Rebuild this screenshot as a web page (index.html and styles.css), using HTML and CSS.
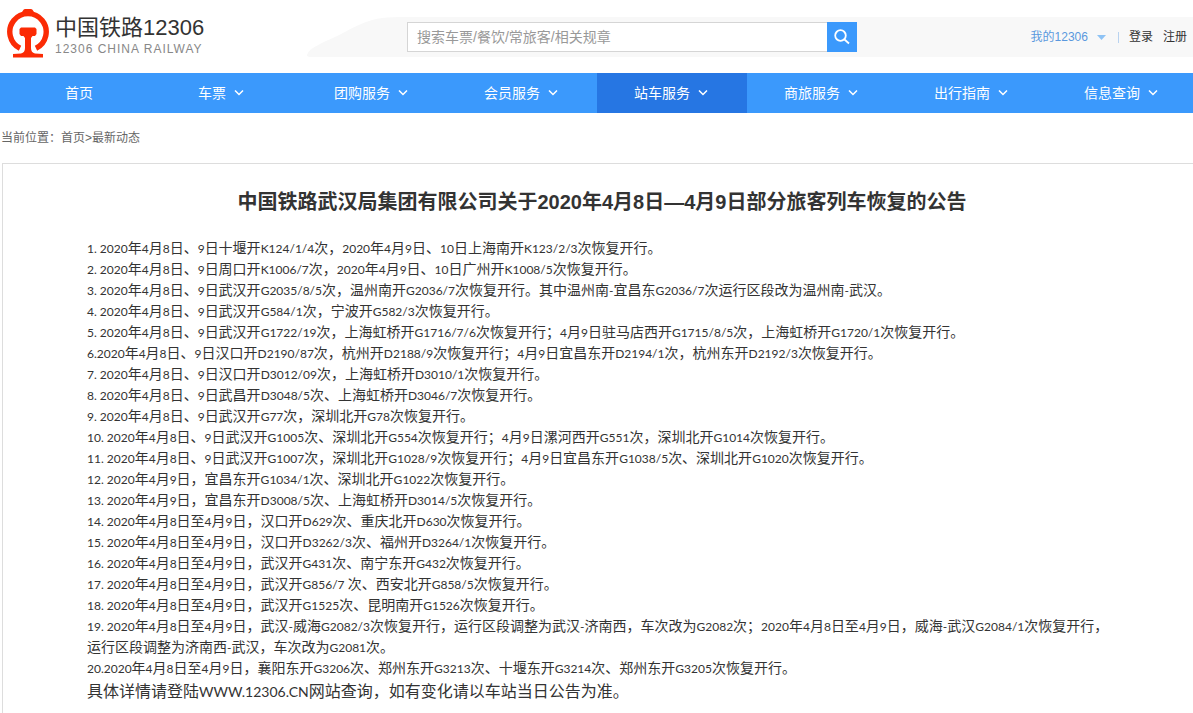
FILE: index.html
```html
<!DOCTYPE html>
<html lang="zh-CN">
<head>
<meta charset="utf-8">
<title>中国铁路12306</title>
<link rel="stylesheet" href="styles.css">
</head>
<body>
<header class="header">
  <a class="logo" href="#">
    <svg class="logo-mark" viewBox="0 0 42 49" width="42" height="49" aria-hidden="true">
      <path d="M13 39.200A18.200 18.200 0 1 1 29 39.200" fill="none" stroke="#fb2b05" stroke-width="5.400"/>
      <path d="M14 5L16 1.500Q16.500 0 18 0H24Q25.500 0 26 1.500L28 5Z" fill="#fb2b05"/>
      <path d="M14 18.500H28L29.500 20V25L28 27H25.500L24 29V39Q24 43.500 28 44.500L36 45V48.500H6V45L14 44.500Q18 43.500 18 39V29L16.500 27H14L12.500 25V20Z" fill="#fb2b05"/>
    </svg>
    <span class="logo-text">
      <span class="logo-cn">中国铁路12306</span>
      <span class="logo-en">12306 CHINA RAILWAY</span>
    </span>
  </a>
  <div class="header-bar">
    <svg class="swoosh" viewBox="0 0 100 40" width="100" height="40" aria-hidden="true"><path d="M0 38C2 31 15 26 28 20C48 11 58 0 92 0H100V40H4Q0 40 0 38Z" fill="#f8f8f8"/></svg>
    <form class="search">
      <input class="search-input" type="text" aria-label="搜索" placeholder="搜索车票/餐饮/常旅客/相关规章">
      <button class="search-button" type="button" aria-label="搜索">
        <svg viewBox="0 0 16 16" width="16" height="16" fill="none" stroke="#fff" stroke-width="1.800"><circle cx="6.500" cy="6.500" r="5.300"/><path d="M10.500 10.500L15 14.500"/></svg>
      </button>
    </form>
    <nav class="account" aria-label="账户">
      <a class="mine" href="#">我的12306<svg viewBox="0 0 9 5" width="9" height="5" aria-hidden="true"><path d="M0 0H9L4.500 5Z" fill="#8ec3f5"/></svg></a>
      <span class="divider"></span>
      <a href="#">登录</a>
      <a href="#">注册</a>
    </nav>
  </div>
</header>
<nav class="menu" aria-label="主导航">
  <a class="home" href="#">首页</a>
  <a href="#">车票<svg class="chev" viewBox="0 0 10 6"><path d="M1 .500L5 4.500L9 .500"/></svg></a>
  <a href="#">团购服务<svg class="chev" viewBox="0 0 10 6"><path d="M1 .500L5 4.500L9 .500"/></svg></a>
  <a href="#">会员服务<svg class="chev" viewBox="0 0 10 6"><path d="M1 .500L5 4.500L9 .500"/></svg></a>
  <a class="active" href="#">站车服务<svg class="chev" viewBox="0 0 10 6"><path d="M1 .500L5 4.500L9 .500"/></svg></a>
  <a href="#">商旅服务<svg class="chev" viewBox="0 0 10 6"><path d="M1 .500L5 4.500L9 .500"/></svg></a>
  <a href="#">出行指南<svg class="chev" viewBox="0 0 10 6"><path d="M1 .500L5 4.500L9 .500"/></svg></a>
  <a href="#">信息查询<svg class="chev" viewBox="0 0 10 6"><path d="M1 .500L5 4.500L9 .500"/></svg></a>
</nav>
<div class="crumbs">当前位置：<a href="#">首页</a>&gt;最新动态</div>
<main class="article">
  <h1>中国铁路武汉局集团有限公司关于2020年4月8日—4月9日部分旅客列车恢复的公告</h1>
  <p><span>1. 2020</span>年<span>4</span>月<span>8</span>日、<span>9</span>日十堰开<span>K124/1/4</span>次，<span>2020</span>年<span>4</span>月<span>9</span>日、<span>10</span>日上海南开<span>K123/2/3</span>次恢复开行。</p>
  <p><span>2. 2020</span>年<span>4</span>月<span>8</span>日、<span>9</span>日周口开<span>K1006/7</span>次，<span>2020</span>年<span>4</span>月<span>9</span>日、<span>10</span>日广州开<span>K1008/5</span>次恢复开行。</p>
  <p><span>3. 2020</span>年<span>4</span>月<span>8</span>日、<span>9</span>日武汉开<span>G2035/8/5</span>次，温州南开<span>G2036/7</span>次恢复开行。其中温州南<span>-</span>宜昌东<span>G2036/7</span>次运行区段改为温州南<span>-</span>武汉。</p>
  <p><span>4. 2020</span>年<span>4</span>月<span>8</span>日、<span>9</span>日武汉开<span>G584/1</span>次，宁波开<span>G582/3</span>次恢复开行。</p>
  <p><span>5. 2020</span>年<span>4</span>月<span>8</span>日、<span>9</span>日武汉开<span>G1722/19</span>次，上海虹桥开<span>G1716/7/6</span>次恢复开行；<span>4</span>月<span>9</span>日驻马店西开<span>G1715/8/5</span>次，上海虹桥开<span>G1720/1</span>次恢复开行。</p>
  <p><span>6.2020</span>年<span>4</span>月<span>8</span>日、<span>9</span>日汉口开<span>D2190/87</span>次，杭州开<span>D2188/9</span>次恢复开行；<span>4</span>月<span>9</span>日宜昌东开<span>D2194/1</span>次，杭州东开<span>D2192/3</span>次恢复开行。</p>
  <p><span>7. 2020</span>年<span>4</span>月<span>8</span>日、<span>9</span>日汉口开<span>D3012/09</span>次，上海虹桥开<span>D3010/1</span>次恢复开行。</p>
  <p><span>8. 2020</span>年<span>4</span>月<span>8</span>日、<span>9</span>日武昌开<span>D3048/5</span>次、上海虹桥开<span>D3046/7</span>次恢复开行。</p>
  <p><span>9. 2020</span>年<span>4</span>月<span>8</span>日、<span>9</span>日武汉开<span>G77</span>次，深圳北开<span>G78</span>次恢复开行。</p>
  <p><span>10. 2020</span>年<span>4</span>月<span>8</span>日、<span>9</span>日武汉开<span>G1005</span>次、深圳北开<span>G554</span>次恢复开行；<span>4</span>月<span>9</span>日漯河西开<span>G551</span>次，深圳北开<span>G1014</span>次恢复开行。</p>
  <p><span>11. 2020</span>年<span>4</span>月<span>8</span>日、<span>9</span>日武汉开<span>G1007</span>次，深圳北开<span>G1028/9</span>次恢复开行；<span>4</span>月<span>9</span>日宜昌东开<span>G1038/5</span>次、深圳北开<span>G1020</span>次恢复开行。</p>
  <p><span>12. 2020</span>年<span>4</span>月<span>9</span>日，宜昌东开<span>G1034/1</span>次、深圳北开<span>G1022</span>次恢复开行。</p>
  <p><span>13. 2020</span>年<span>4</span>月<span>9</span>日，宜昌东开<span>D3008/5</span>次、上海虹桥开<span>D3014/5</span>次恢复开行。</p>
  <p><span>14. 2020</span>年<span>4</span>月<span>8</span>日至<span>4</span>月<span>9</span>日，汉口开<span>D629</span>次、重庆北开<span>D630</span>次恢复开行。</p>
  <p><span>15. 2020</span>年<span>4</span>月<span>8</span>日至<span>4</span>月<span>9</span>日，汉口开<span>D3262/3</span>次、福州开<span>D3264/1</span>次恢复开行。</p>
  <p><span>16. 2020</span>年<span>4</span>月<span>8</span>日至<span>4</span>月<span>9</span>日，武汉开<span>G431</span>次、南宁东开<span>G432</span>次恢复开行。</p>
  <p><span>17. 2020</span>年<span>4</span>月<span>8</span>日至<span>4</span>月<span>9</span>日，武汉开<span>G856/7 </span>次、西安北开<span>G858/5</span>次恢复开行。</p>
  <p><span>18. 2020</span>年<span>4</span>月<span>8</span>日至<span>4</span>月<span>9</span>日，武汉开<span>G1525</span>次、昆明南开<span>G1526</span>次恢复开行。</p>
  <p><span>19. 2020</span>年<span>4</span>月<span>8</span>日至<span>4</span>月<span>9</span>日，武汉<span>-</span>威海<span>G2082/3</span>次恢复开行，运行区段调整为武汉<span>-</span>济南西，车次改为<span>G2082</span>次；<span>2020</span>年<span>4</span>月<span>8</span>日至<span>4</span>月<span>9</span>日，威海<span>-</span>武汉<span>G2084/1</span>次恢复开行，运行区段调整为济南西<span>-</span>武汉，车次改为<span>G2081</span>次。</p>
  <p><span>20.2020</span>年<span>4</span>月<span>8</span>日至<span>4</span>月<span>9</span>日，襄阳东开<span>G3206</span>次、郑州东开<span>G3213</span>次、十堰东开<span>G3214</span>次、郑州东开<span>G3205</span>次恢复开行。</p>
  <p class="note">具体详情请登陆<span>WWW.12306.CN</span>网站查询，如有变化请以车站当日公告为准。</p>
</main>
</body>
</html>
```

FILE: styles.css
```css
* { box-sizing: border-box; }
body {
  margin: 0;
  overflow-x: hidden;
  background: #fff;
  color: #333;
  font: 12px/20px "Liberation Sans", "Noto Sans CJK SC", sans-serif;
}
a { color: inherit; text-decoration: none; }

.header { display: flex; height: 73px; }
.logo { display: flex; gap: 6px; width: 307px; padding: 9px 0 0 7px; }
.logo-mark { flex: none; }
.logo-text { display: flex; flex-direction: column; padding-top: 5px; }
.logo-cn { font-size: 22px; line-height: 28px; }
.logo-en { color: #888; font-size: 12px; line-height: 14px; letter-spacing: 1px; white-space: nowrap; }

.header-bar {
  flex: 1;
  display: flex;
  align-items: center;
  height: 40px;
  margin-top: 17px;
  padding-right: 6px;
  background: linear-gradient(#f8f8f8, #f8f8f8) no-repeat 100px 0;
}
.swoosh { flex: none; }
.search { display: flex; width: 450px; height: 30px; }
.search-input {
  flex: 1;
  min-width: 0;
  padding: 0 9px;
  border: 1px solid #d5d5d5;
  border-right: 0;
  border-radius: 0;
  background: #fff;
  color: #333;
  font: 14px "Liberation Sans", "Noto Sans CJK SC", sans-serif;
}
.search-input::placeholder { color: #999; opacity: 1; }
.search-button {
  display: grid;
  place-items: center;
  width: 30px;
  padding: 0;
  border: 0;
  background: #3b99fc;
}
.account { display: flex; align-items: center; gap: 10px; margin-left: auto; white-space: nowrap; }
.mine { display: flex; align-items: center; gap: 9px; padding-right: 2px; color: #5a98de; }
.divider { width: 1px; height: 11px; background: #b9d3f0; }

.menu { display: flex; min-width: 1197px; height: 40px; background: #3b99fc; color: #fff; font-size: 14px; }
.menu a { flex: 1 0 150px; display: flex; align-items: center; justify-content: center; gap: 8px; padding-right: 2px; }
.menu .home { flex-basis: 147px; padding: 0 0 0 11px; }
.menu .active { background: #2676e3; }
.chev { width: 10px; height: 6px; fill: none; stroke: #fff; stroke-width: 1.5; }

.crumbs { padding: 15px 1px; color: #666; }

.article {
  min-width: 1200px;
  min-height: 560px;
  margin-left: 2px;
  padding: 23px 84px;
  border: 1px solid #ddd;
}
.article h1 { margin: 0 0 20px; font-size: 20px; line-height: 30px; text-align: center; }
.article p { margin: 0; font: 14px/21px "Noto Sans CJK SC", sans-serif; }
.article span { font: 12px/1 Lato, sans-serif; }
.article .note { font-size: 16px; line-height: 24px; }
.article .note span { font-size: 14px; }
```
